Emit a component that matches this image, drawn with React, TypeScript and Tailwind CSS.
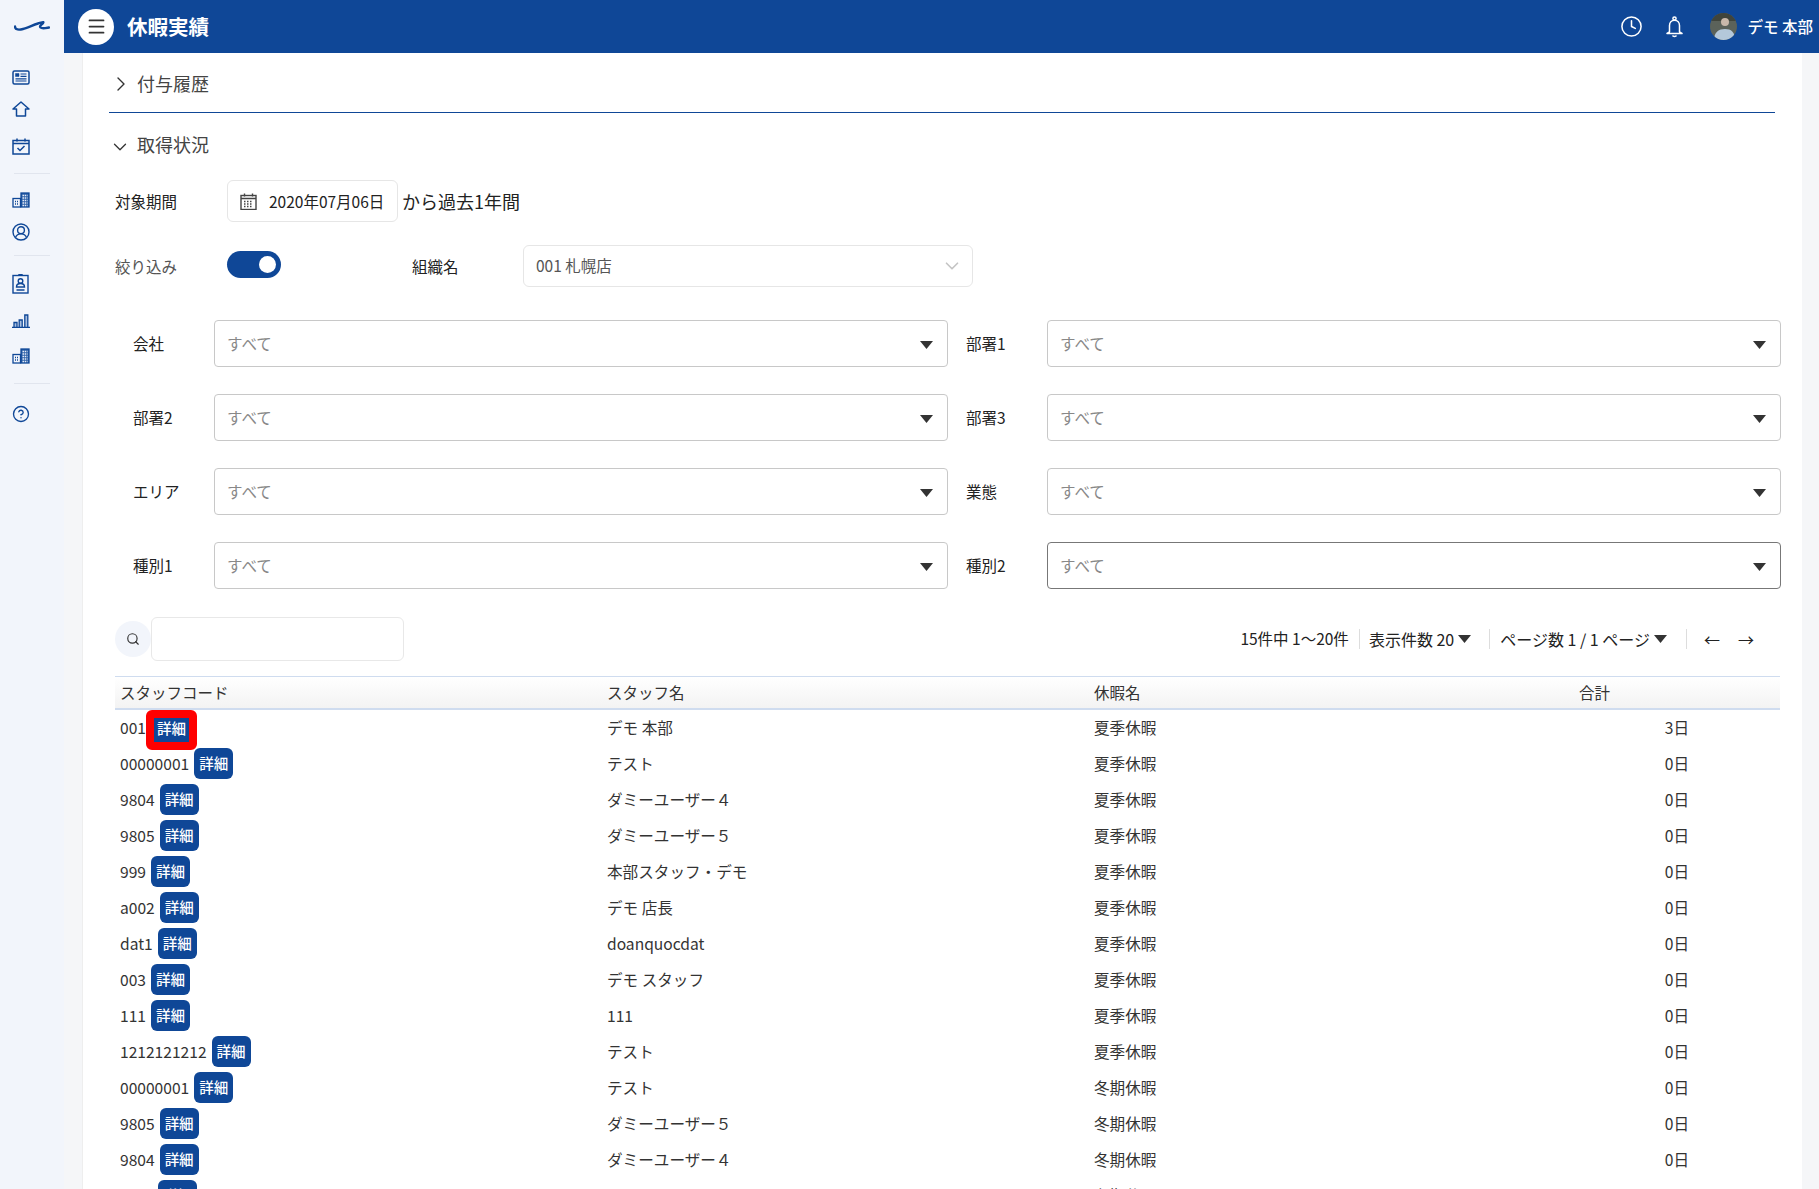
import { ChevronDown, ChevronRight, Clock, Search, CircleHelp, Menu } from 'lucide-react';

const FONT = "font-['Noto_Sans_CJK_JP','Noto_Sans',sans-serif]";

const rows = [
  { code: '001', name: 'デモ 本部', leave: '夏季休暇', total: '3日' },
  { code: '00000001', name: 'テスト', leave: '夏季休暇', total: '0日' },
  { code: '9804', name: 'ダミーユーザー４', leave: '夏季休暇', total: '0日' },
  { code: '9805', name: 'ダミーユーザー５', leave: '夏季休暇', total: '0日' },
  { code: '999', name: '本部スタッフ・デモ', leave: '夏季休暇', total: '0日' },
  { code: 'a002', name: 'デモ 店長', leave: '夏季休暇', total: '0日' },
  { code: 'dat1', name: 'doanquocdat', leave: '夏季休暇', total: '0日' },
  { code: '003', name: 'デモ スタッフ', leave: '夏季休暇', total: '0日' },
  { code: '111', name: '111', leave: '夏季休暇', total: '0日' },
  { code: '1212121212', name: 'テスト', leave: '夏季休暇', total: '0日' },
  { code: '00000001', name: 'テスト', leave: '冬期休暇', total: '0日' },
  { code: '9805', name: 'ダミーユーザー５', leave: '冬期休暇', total: '0日' },
  { code: '9804', name: 'ダミーユーザー４', leave: '冬期休暇', total: '0日' },
  { code: 'dat1', name: 'doanquocdat', leave: '冬期休暇', total: '0日' },
];

const filters = [
  ['会社', '部署1'],
  ['部署2', '部署3'],
  ['エリア', '業態'],
  ['種別1', '種別2'],
];

function Building() {
  return (
    <svg width="18" height="16" viewBox="0 0 18 16" fill="none" stroke="#0f4797" strokeWidth="1.3">
      <rect x="1" y="6.5" width="7.5" height="8.5" />
      <rect x="9" y="1" width="8" height="14" fill="#2f62a8" />
      <path d="M3 9.5h3.5M3 12h3.5" strokeDasharray="1 1" />
      <path d="M10.5 3.5h5M10.5 6h5M10.5 8.5h5M10.5 11h5M10.5 13.5h5" stroke="#e6ecf7" strokeDasharray="1.5 0.7" />
    </svg>
  );
}

function SideItem({ children, className = '' }: { children: React.ReactNode; className?: string }) {
  return <div className={`h-8 w-[41px] flex items-center justify-center ${className}`}>{children}</div>;
}

function SideDivider({ className = '' }: { className?: string }) {
  return <div className={`ml-[14px] w-9 h-px bg-[#e1e5ee] ${className}`} />;
}

function Sidebar() {
  return (
    <aside className="w-16 shrink-0 bg-[#f2f5fb] flex flex-col">
      <div className="h-[53px] pl-[14px] flex items-center">
        <svg width="36" height="13" viewBox="0 0 36 13" fill="none" stroke="#0f4797" strokeLinecap="round">
          <path d="M1 6.5C1 10 5 10 9 9S19 5 24 3.5 30 1.5 29 3 25 6 26.5 7.5 32 8 35 7.5" strokeWidth="2.4" />
        </svg>
      </div>
      <SideItem className="mt-2">
        <svg width="18" height="15" viewBox="0 0 18 15" fill="none" stroke="#0f4797" strokeWidth="1.5">
          <rect x="1" y="1" width="16" height="13" rx="1.5" />
          <path d="M3.5 3.5h3.5v3H3.5z" fill="#0f4797" strokeWidth="0.5" />
          <path d="M8.5 4h6M8.5 6.3h6M3.5 8.8h11M3.5 11h11" strokeWidth="1.2" />
        </svg>
      </SideItem>
      <SideItem>
        <svg width="18" height="16" viewBox="0 0 18 16" fill="none" stroke="#0f4797" strokeWidth="1.5" strokeLinejoin="round">
          <path d="M9 1L1 8h3.5v7h9V8H17z" />
        </svg>
      </SideItem>
      <SideItem className="mt-[5px]">
        <svg width="18" height="17" viewBox="0 0 18 17" fill="none" stroke="#0f4797" strokeWidth="1.5">
          <rect x="1" y="2.5" width="16" height="13.5" />
          <path d="M1 5.5h16M5 0.5v3M13 0.5v3" />
          <path d="M5.5 10l2.5 2.5 4.5-4.5" />
        </svg>
      </SideItem>
      <SideDivider className="mt-[11px]" />
      <SideItem className="mt-[10px]">
        <Building />
      </SideItem>
      <SideItem>
        <svg width="18" height="18" viewBox="0 0 18 18" fill="none" stroke="#0f4797" strokeWidth="1.4">
          <circle cx="9" cy="9" r="8" />
          <circle cx="9" cy="7.2" r="3.4" />
          <path d="M3.5 14.5c1-2.5 3-3.6 5.5-3.6s4.5 1.1 5.5 3.6" />
        </svg>
      </SideItem>
      <SideDivider className="mt-[7px]" />
      <SideItem className="mt-3">
        <svg width="17" height="20" viewBox="0 0 17 20" fill="none" stroke="#0f4797" strokeWidth="1.4">
          <rect x="1" y="1.5" width="15" height="17.5" />
          <path d="M7 1.5V0.5h3v1" />
          <circle cx="8.5" cy="7" r="2.3" />
          <path d="M4.5 13c0-2.5 1.5-3.5 4-3.5s4 1 4 3.5zM4.5 16h8" />
        </svg>
      </SideItem>
      <SideItem className="mt-[5px]">
        <svg width="18" height="14" viewBox="0 0 18 14" fill="#a9bfe0" stroke="#0f4797" strokeWidth="1.3">
          <path d="M0 13.4h18" />
          <path d="M2 8.5h3v4.9H2zM7.2 6h3v7.4h-3zM12.8 1h3v12.4h-3z" />
        </svg>
      </SideItem>
      <SideItem className="mt-[3px]">
        <Building />
      </SideItem>
      <SideDivider className="mt-[11px]" />
      <SideItem className="mt-[14px]">
        <CircleHelp size={18} color="#0f4797" strokeWidth={1.8} />
      </SideItem>
    </aside>
  );
}

function Topbar() {
  return (
    <header className="h-[53px] shrink-0 bg-[#0f4797] flex items-center text-white">
      <div className="ml-[14px] w-9 h-9 rounded-full bg-white flex items-center justify-center">
        <Menu size={21} color="#333333" strokeWidth={2} />
      </div>
      <h1 className="ml-[13px] text-[20.5px] font-bold">休暇実績</h1>
      <div className="ml-auto flex items-center">
        <Clock size={23} color="#ffffff" strokeWidth={1.6} />
        <svg className="ml-[23px]" width="17" height="22" viewBox="0 0 17 22" fill="none" stroke="#ffffff" strokeWidth="1.5">
          <circle cx="8.5" cy="2.5" r="1.6" />
          <path d="M3.5 16V9.5C3.5 6.5 5.5 4.2 8.5 4.2s5 2.3 5 5.3V16l2.5 1.5H1z" strokeLinejoin="round" />
          <path d="M6.5 19.5c.5 1.3 3.5 1.3 4 0" />
        </svg>
        <svg className="ml-[27px] rounded-full" width="27" height="27" viewBox="0 0 27 27">
          <rect width="27" height="27" fill="#5b625a" />
          <rect x="0" y="0" width="27" height="8" fill="#3f443c" />
          <circle cx="15" cy="9" r="4" fill="#c9b8aa" />
          <path d="M4 27c0-8 5-11 11-11s10 3 10 11z" fill="#b4c8da" />
        </svg>
        <span className="ml-[11px] mr-[6px] text-[15.5px] font-medium whitespace-nowrap">デモ 本部</span>
      </div>
    </header>
  );
}

function FilterSelect({ label, dark }: { label: string; dark?: boolean }) {
  return (
    <div className="flex items-center">
      <div className="w-[99px] shrink-0 pl-[18px] text-[15.5px] text-[#222222]">{label}</div>
      <div
        className={`flex-1 h-[47px] border rounded-[4px] pl-3 pr-[14px] flex items-center justify-between text-[15.5px] text-[#888888] ${dark ? 'border-[#777777]' : 'border-[#c8c8c8]'}`}
      >
        <span>すべて</span>
        <svg className="mt-[2px]" width="13" height="8" viewBox="0 0 13 8" fill="#333333">
          <path d="M0 0h13L6.5 8z" />
        </svg>
      </div>
    </div>
  );
}

function DetailButton({ first }: { first?: boolean }) {
  if (first) {
    return (
      <button className="mt-1 w-[51px] h-10 shrink-0 border-8 border-[#ff0000] rounded-[6px] bg-[#0f4797] pb-1 text-white text-[14.5px] font-medium leading-none flex items-center justify-center whitespace-nowrap">
        詳細
      </button>
    );
  }
  return (
    <button className="ml-[5px] -mt-px w-[39px] h-[31px] shrink-0 rounded-[6px] bg-[#0f4797] text-white text-[14.5px] font-medium leading-none flex items-center justify-center whitespace-nowrap">
      詳細
    </button>
  );
}

function Caret() {
  return (
    <svg className="ml-1" width="13" height="8" viewBox="0 0 13 8" fill="#333333">
      <path d="M0 0h13L6.5 8z" />
    </svg>
  );
}

export default function App() {
  return (
    <div className={`h-screen overflow-hidden flex bg-[#f5f6f8] text-[#333333] ${FONT}`}>
      <Sidebar />
      <div className="flex-1 min-w-0 flex flex-col">
        <Topbar />
        <main className="flex-1 min-h-0 overflow-hidden ml-[18px] mr-[17px] bg-white border-l border-[#eeeeee] text-[15.5px]">
          {/* 付与履歴 */}
          <div className="ml-[26px] mr-[27px] h-[60px] border-b border-[#0f4797] flex items-center">
            <ChevronRight size={24} strokeWidth={1.4} className="mt-[3px]" />
            <span className="ml-[4px] mt-[2px] text-[18px] text-[#444444]">付与履歴</span>
          </div>

          <div className="ml-[32px] mr-[21px]">
            {/* 取得状況 */}
            <div className="h-[65px] flex items-center">
              <ChevronDown size={22} strokeWidth={1.4} className="-ml-[6px] mt-[2px]" />
              <span className="ml-[6px] -mt-[2px] text-[18px] text-[#444444]">取得状況</span>
            </div>

            {/* 対象期間 */}
            <div className="mt-[2px] flex items-center">
              <div className="w-[112px] mt-px text-[#222222]">対象期間</div>
              <div className="w-[171px] h-[42px] border border-[#e6e6e6] rounded-md flex items-center pl-[12px]">
                <svg width="17" height="17" viewBox="0 0 17 17" fill="none" stroke="#444444" strokeWidth="1.4">
                  <rect x="1" y="2.5" width="15" height="14" />
                  <path d="M1 5.5h15M4.5 0.5v3M12.5 0.5v3" />
                  <path d="M4 8.5h9M4 11h9M4 13.5h9" strokeDasharray="1.5 1.5" />
                </svg>
                <span className="ml-[12px] mt-px text-[15.5px] whitespace-nowrap text-[#222222]">2020年07月06日</span>
              </div>
              <span className="ml-[4px] text-[18px] text-[#222222]">から過去1年間</span>
            </div>

            {/* 絞り込み / 組織名 */}
            <div className="mt-[23px] flex items-center">
              <div className="w-[112px] mt-px text-[#555555]">絞り込み</div>
              <div className="w-[54px] h-[27px] -mt-[4px] rounded-full bg-[#0f4797] flex items-center justify-end pr-[5px]">
                <div className="w-[17px] h-[17px] rounded-full bg-white" />
              </div>
              <div className="ml-[131px] w-[111px] mt-px text-[#222222]">組織名</div>
              <div className="w-[450px] h-[42px] border border-[#e6e6e6] rounded-md flex items-center justify-between pl-[12px] pr-[9px] text-[15.5px] text-[#555555]">
                <span>001 札幌店</span>
                <ChevronDown size={22} color="#c4c4c4" strokeWidth={1.8} />
              </div>
            </div>

            {/* フィルター */}
            <div className="mt-[33px] grid grid-cols-2 gap-y-[27px]">
              {filters.flat().map((label) => (
                <FilterSelect key={label} label={label} dark={label === '種別2'} />
              ))}
            </div>

            {/* 検索 / ページ */}
            <div className="mt-[28px] flex items-center">
              <div className="w-9 h-9 rounded-full bg-[#f2f5fb] flex items-center justify-center">
                <Search size={14} color="#333333" strokeWidth={2} />
              </div>
              <div className="w-[253px] h-[44px] border border-[#e8e8e8] rounded-md" />
              <div className="ml-auto pr-[27px] flex items-center text-[16px] text-[#222222] whitespace-nowrap">
                <span className="text-[15.5px]">15件中 1〜20件</span>
                <div className="ml-[10px] w-px h-5 bg-[#dddddd]" />
                <span className="ml-[9px]">表示件数 20</span>
                <Caret />
                <div className="ml-[18px] w-px h-5 bg-[#dddddd]" />
                <span className="ml-[10px]">ページ数 1 / 1 ページ</span>
                <Caret />
                <div className="ml-[19px] w-px h-5 bg-[#dddddd]" />
                <span className="ml-[17px]">←</span>
                <span className="ml-[18px]">→</span>
              </div>
            </div>

            {/* テーブル */}
            <div className="mt-[15px] mr-px">
              <div className="h-[34px] grid grid-cols-[487px_487px_485px_1fr] items-center pl-[5px] border-t border-b-2 border-t-[#cfdcef] border-b-[#cfdcef] bg-gradient-to-b from-white to-[#f3f3f3] text-[#333333]">
                <div>スタッフコード</div>
                <div>スタッフ名</div>
                <div>休暇名</div>
                <div>合計</div>
              </div>
              {rows.map((row, index) => (
                <div key={index} className="h-9 grid grid-cols-[487px_487px_485px_1fr] grid-rows-[36px] items-center pl-[5px] text-[15.6px] text-[#333333]">
                  <div className="h-9 flex items-center">
                    <span>{row.code}</span>
                    <DetailButton first={index === 0} />
                  </div>
                  <div>{row.name}</div>
                  <div>{row.leave}</div>
                  <div className="w-[110px] text-right">{row.total}</div>
                </div>
              ))}
            </div>
          </div>
        </main>
      </div>
    </div>
  );
}
